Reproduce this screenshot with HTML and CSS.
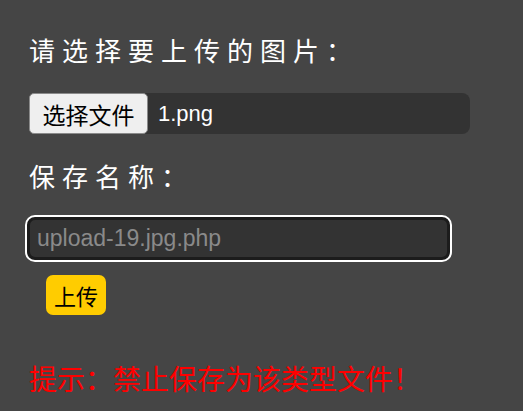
FILE: index.html
```html
<!DOCTYPE html>
<html lang="zh-CN">
<head>
    <meta charset="UTF-8">
    <meta name="viewport" content="width=device-width, initial-scale=1.0">
    <title>上传</title>
    <link rel="stylesheet" href="styles.css">
</head>
<body>
   <form class="upload">
      <p class="title">请选择要上传的图片：</p>
      <div class="file">
         <button type="button" class="file-btn">选择文件</button>
         <span class="file-name">1.png</span>
      </div>
      <p class="title name-title">保存名称：</p>
      <input type="text" class="save-name" value="upload-19.jpg.php">
      <button type="submit" class="submit">上传</button>
      <p class="tip">提示：禁止保存为该类型文件！</p>
   </form>
</body>
</html>
```

FILE: styles.css
```css
body {
    margin: 0;
    background-color: #454545;
    font-family: 'Liberation Sans', 'Noto Sans CJK SC', sans-serif;
    min-height: 100vh;
}

.upload {
    padding: 32px 0 0 29px;
}

.title {
    margin: 0;
    color: #fff;
    font-size: 26px;
    line-height: 40px;
    letter-spacing: 7px;
}

.file {
    display: flex;
    align-items: stretch;
    width: 441px;
    height: 41px;
    margin-top: 21px;
    background-color: #333;
    border-radius: 8px;
}

.file-btn {
    width: 119px;
    padding: 0;
    background-color: #efefef;
    border: 1px solid #8a8a8a;
    border-radius: 5px;
    font-family: inherit;
    font-size: 23px;
    color: #000;
}

.file-name {
    color: #fff;
    font-size: 22px;
    line-height: 41px;
    margin-left: 10px;
}

.name-title {
    margin-top: 24px;
}

.save-name {
    display: block;
    box-sizing: border-box;
    width: 427px;
    height: 47px;
    margin: 17px 0 0 -4px;
    padding: 0 10px;
    background-color: #333;
    border: 2px solid #fff;
    border-radius: 10px;
    box-shadow: inset 0 0 0 3px #1c1c1c;
    color: #8a8a8a;
    font-family: inherit;
    font-size: 23px;
    outline: none;
}

.submit {
    display: block;
    width: 60px;
    height: 40px;
    margin: 13px 0 0 17px;
    padding: 0;
    background-color: #ffcc00;
    border: none;
    border-radius: 7px;
    font-family: inherit;
    font-size: 22px;
    color: #000;
}

.tip {
    margin: 46px 0 0;
    color: #f00;
    font-size: 28px;
    line-height: 40px;
}
```
